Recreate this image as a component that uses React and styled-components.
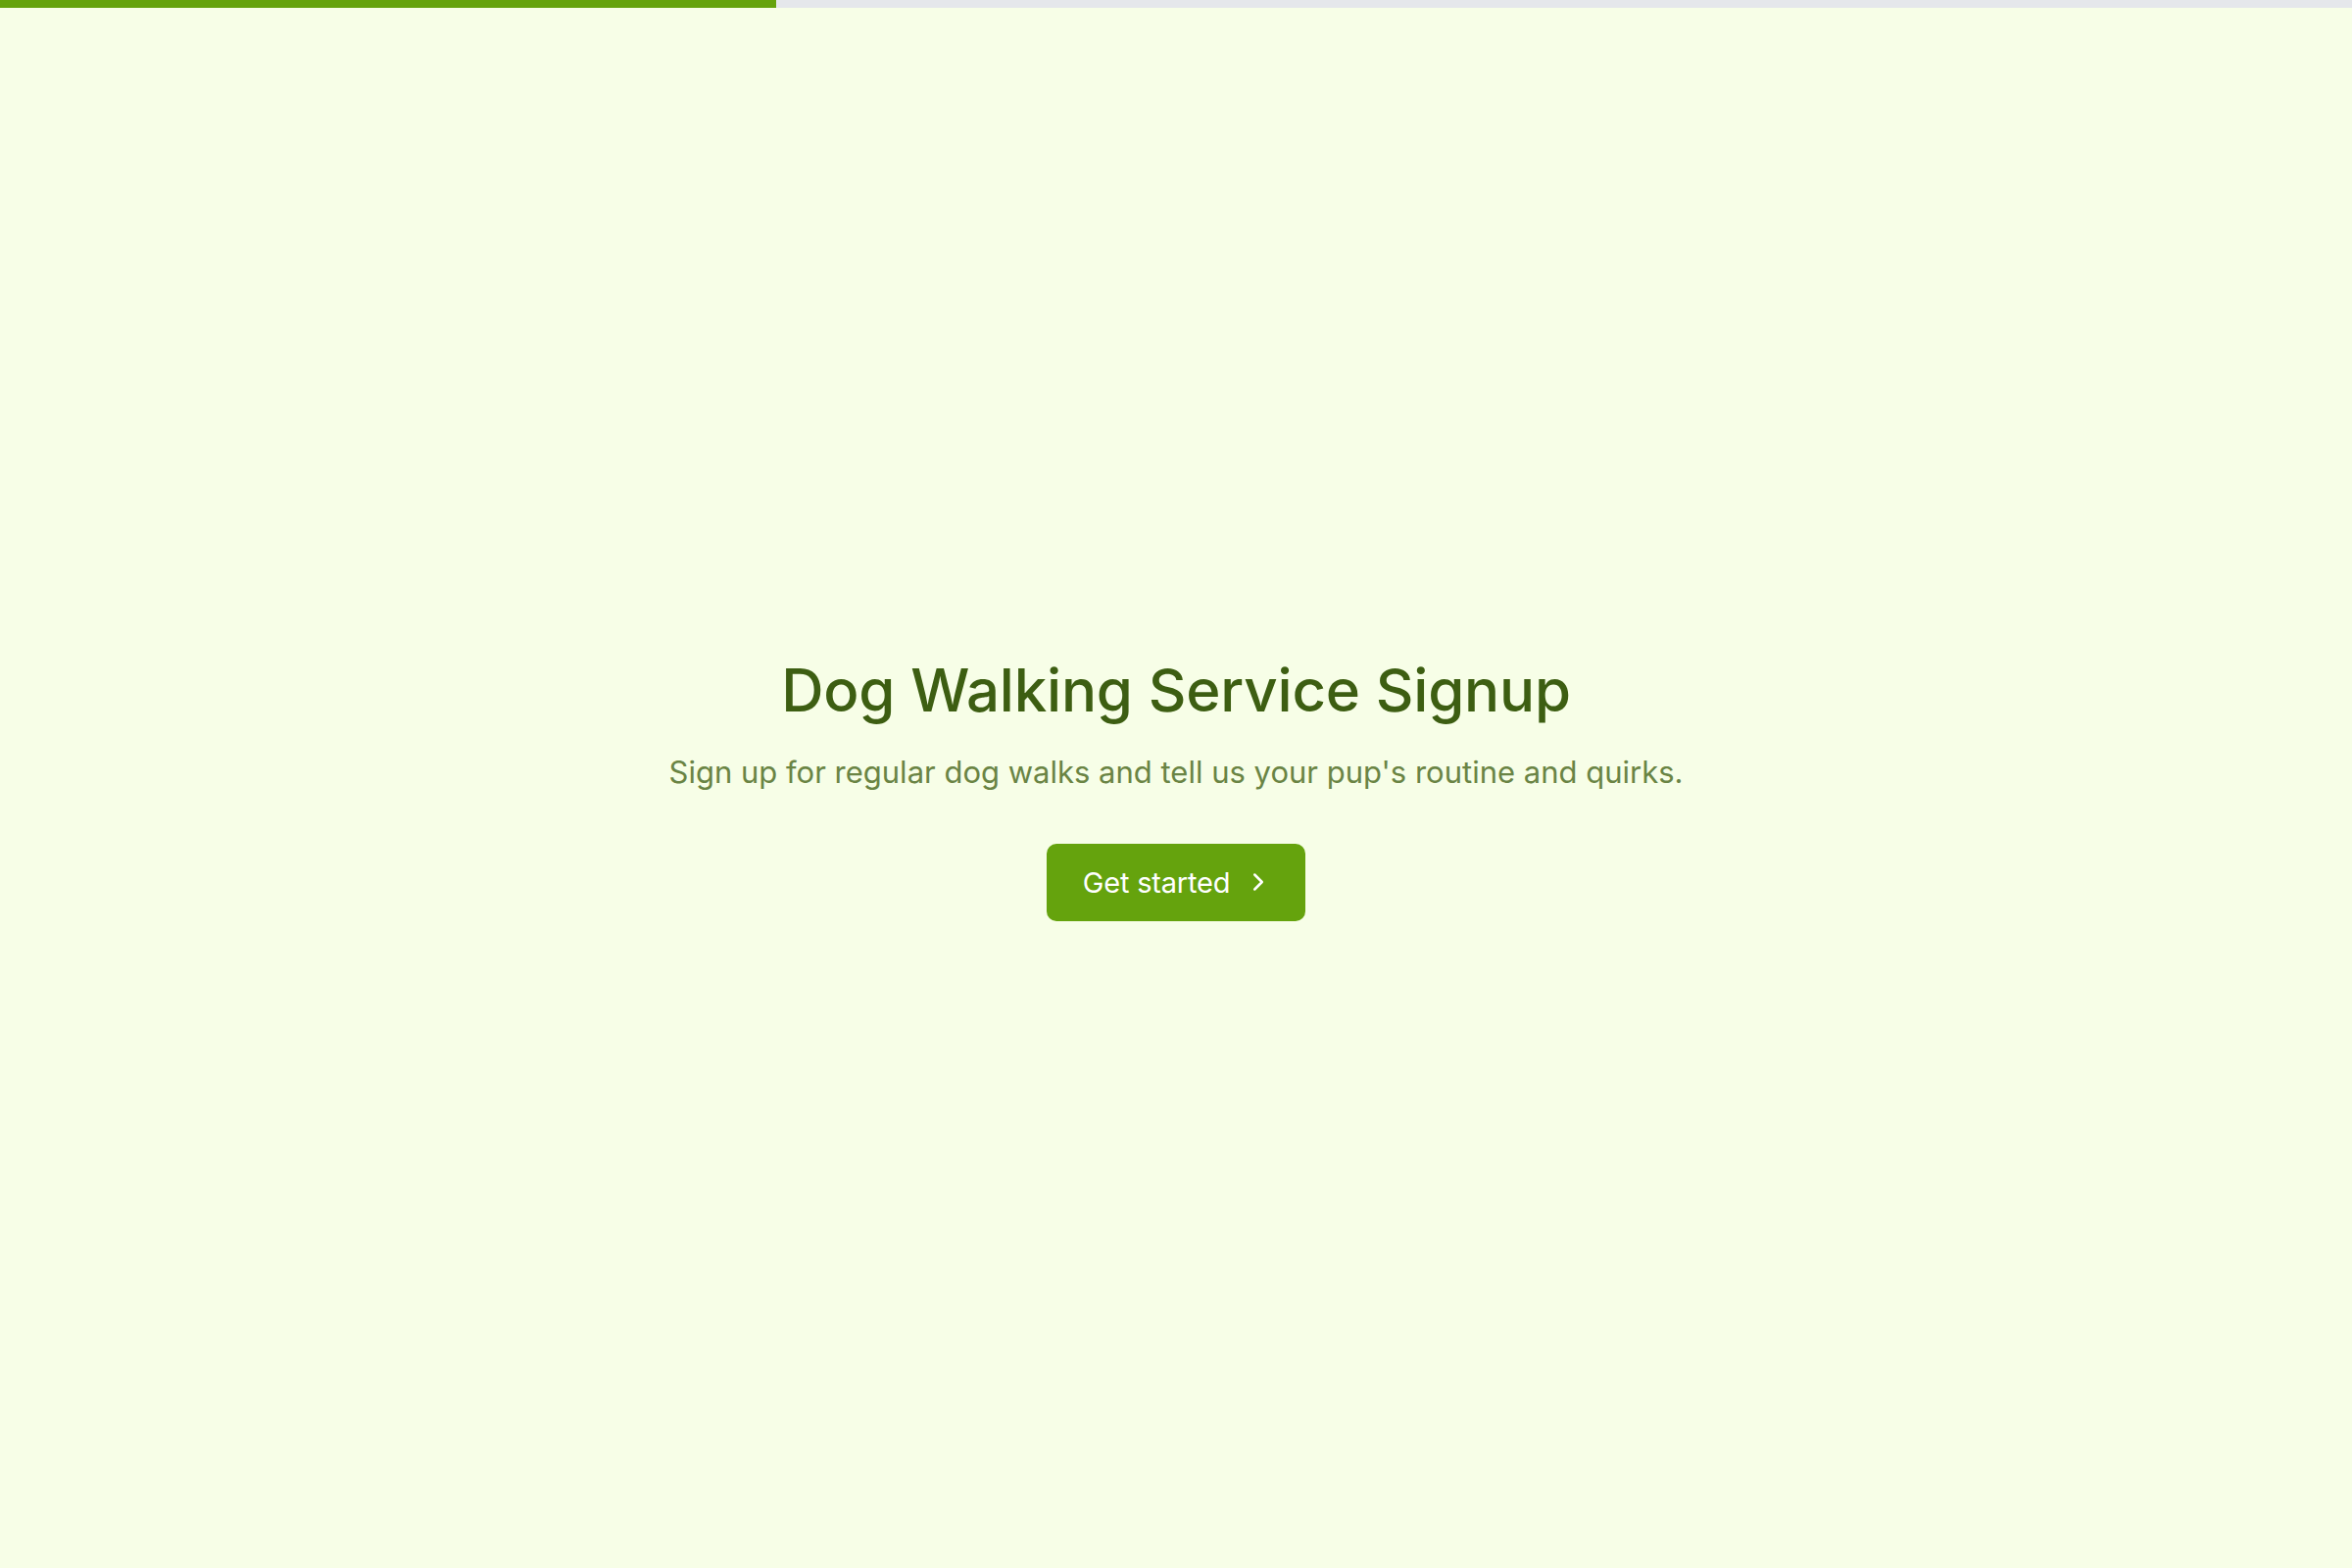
import React from 'react';
import styled, { createGlobalStyle } from 'styled-components';
import { ChevronRight } from 'lucide-react';

const GlobalStyle = createGlobalStyle`
  html, body {
    margin: 0;
    padding: 0;
    background: #f7fee7;
  }
  body {
    font-family: 'Inter', 'Open Sans', sans-serif;
    -webkit-font-smoothing: antialiased;
  }
`;

const Page = styled.div`
  display: flex;
  flex-direction: column;
  min-height: 100vh;
  background: #f7fee7;
`;

const ProgressTrack = styled.div`
  height: 8px;
  width: 100%;
  background: #e5e7eb;
`;

const ProgressFill = styled.div`
  height: 100%;
  background: #65a30d;
`;

const Intro = styled.main`
  flex: 1;
  display: flex;
  flex-direction: column;
  align-items: center;
  justify-content: center;
  text-align: center;
`;

const Title = styled.h1`
  margin: 0;
  font-size: 60px;
  line-height: 1.2;
  font-weight: 500;
  letter-spacing: -0.2px;
  color: #3d5e12;
`;

const Subtitle = styled.p`
  margin: 26px 0 0;
  font-size: 31px;
  line-height: 1.4;
  font-weight: 400;
  letter-spacing: 0;
  color: #6a8444;
`;

const StartButton = styled.button`
  display: inline-flex;
  align-items: center;
  gap: 14px;
  margin-top: 51px;
  height: 79px;
  padding: 0 33px 0 37px;
  border: none;
  border-radius: 10px;
  background: #65a30d;
  color: #fff;
  font-family: inherit;
  font-size: 29px;
  font-weight: 400;
  letter-spacing: -0.2px;
  cursor: pointer;

  svg {
    width: 30px;
    height: 30px;
    stroke-width: 2;
  }
`;

export default function App() {
  const progress = 33;

  return (
    <>
      <GlobalStyle />
      <Page>
        <ProgressTrack>
          <ProgressFill style={{ width: `${progress}%` }} />
        </ProgressTrack>
        <Intro>
          <Title>Dog Walking Service Signup</Title>
          <Subtitle>
            Sign up for regular dog walks and tell us your pup's routine and quirks.
          </Subtitle>
          <StartButton type="button">
            Get started
            <ChevronRight />
          </StartButton>
        </Intro>
      </Page>
    </>
  );
}
